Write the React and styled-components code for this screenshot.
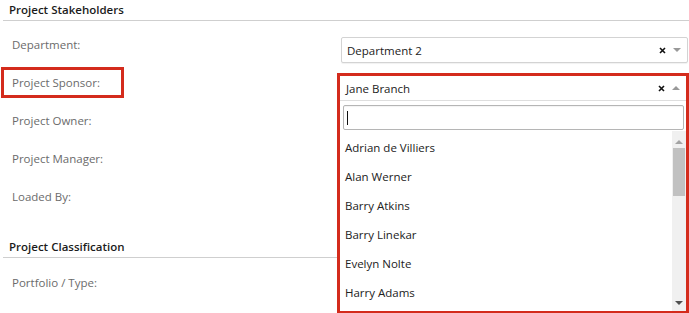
import React from 'react'
import styled, { createGlobalStyle } from 'styled-components'

const GlobalStyle = createGlobalStyle`
  html, body {
    margin: 0;
    padding: 0;
    background: #fff;
  }
  body {
    font-family: "Open Sans", "Noto Sans", sans-serif;
    font-size: 12px;
    color: #333;
  }
`

const Page = styled.div`
  width: 689px;
  height: 313px;
  overflow: hidden;
  background: #fff;
`

const Section = styled.div`
  margin-top: ${props => props.gap || 0}px;
`

const SectionTitle = styled.div`
  margin-left: 3px;
  padding-left: 6px;
  height: 20px;
  line-height: 20px;
  font-weight: 600;
  font-size: 11.5px;
  color: #1b1b1b;
  border-bottom: 1px solid #cfcfcf;
  margin-bottom: ${props => props.after || 8}px;
`

const Row = styled.div`
  display: grid;
  grid-template-columns: 341px 1fr;
  height: 38px;
  padding-right: 1px;
`

const Label = styled.div`
  margin: 3px 0 0 4px;
  width: 117px;
  height: 25px;
  line-height: 25px;
  padding-left: 8px;
  box-sizing: border-box;
  font-size: 11.5px;
  color: #6b6b6b;
  outline: ${props => (props.highlighted ? '3px solid #d42b1c' : 'none')};
`

const Field = styled.div`
  position: relative;
  margin-top: 8px;
`

const SelectBox = styled.div`
  display: flex;
  align-items: center;
  height: 26px;
  box-sizing: border-box;
  padding: 0 6px 0 5px;
  border: 1px solid #d3d3d3;
  border-radius: 2px;
  box-shadow: 0 1px 1px rgba(0, 0, 0, 0.06);
  background: #fff;
`

const SelectHead = styled.div`
  display: flex;
  align-items: center;
  height: 24px;
  padding: 0 6px 0 6px;
  border-bottom: 1px solid #dedede;
`

const Value = styled.span`
  flex: 1;
  font-size: 11.5px;
  color: #222;
`

const Clear = styled.span`
  width: 9px;
  display: flex;
  justify-content: center;
  margin-right: 6px;
`

const Arrow = styled.span`
  width: 0;
  height: 0;
  border-left: 4px solid transparent;
  border-right: 4px solid transparent;
  ${props =>
    props.up
      ? 'border-bottom: 4px solid #999;'
      : 'border-top: 4px solid #999;'}
`

const Highlight = styled.div`
  position: absolute;
  top: -2px;
  left: -4px;
  right: -1px;
  border: 3px solid #d42b1c;
  background: #fff;
  z-index: 2;
`

const SearchWrap = styled.div`
  padding: 4px 2px 1px 3px;
`

const Search = styled.div`
  height: 25px;
  box-sizing: border-box;
  border: 1px solid #b5b5b5;
  border-radius: 2px;
  box-shadow: inset 0 1px 1px rgba(0, 0, 0, 0.05);
  display: flex;
  align-items: center;
  padding-left: 3px;
`

const Caret = styled.span`
  width: 1px;
  height: 14px;
  background: #111;
`

const ListArea = styled.div`
  display: flex;
  height: 180px;
`

const Options = styled.ul`
  flex: 1;
  list-style: none;
  margin: 0;
  padding: 2px 0 0 0;
  overflow: hidden;
`

const Option = styled.li`
  height: 29px;
  line-height: 29px;
  padding-left: 5px;
  font-size: 11.5px;
  color: #222;
`

const Track = styled.div`
  width: 14px;
  background: #f0f0f0;
  display: flex;
  flex-direction: column;
  align-items: center;
`

const TrackArrow = styled.span`
  margin: ${props => (props.up ? '9px 0 4px' : 'auto 0 6px')};
  width: 0;
  height: 0;
  border-left: 4px solid transparent;
  border-right: 4px solid transparent;
  ${props =>
    props.up
      ? 'border-bottom: 4px solid #a3a3a3;'
      : 'border-top: 4px solid #505050;'}
`

const Thumb = styled.span`
  width: 12px;
  height: 48px;
  background: #c1c1c1;
`

const ClearIcon = () => (
  <svg width="7" height="7" viewBox="0 0 7 7">
    <path d="M1 1L6 6M6 1L1 6" stroke="#111" strokeWidth="1.6" />
  </svg>
)

const people = [
  'Adrian de Villiers',
  'Alan Werner',
  'Barry Atkins',
  'Barry Linekar',
  'Evelyn Nolte',
  'Harry Adams'
]

export default function App() {
  return (
    <Page>
      <GlobalStyle />
      <Section>
        <SectionTitle>Project Stakeholders</SectionTitle>
        <Row>
          <Label>Department:</Label>
          <Field>
            <SelectBox>
              <Value>Department 2</Value>
              <Clear>
                <ClearIcon />
              </Clear>
              <Arrow />
            </SelectBox>
          </Field>
        </Row>
        <Row>
          <Label highlighted>Project Sponsor:</Label>
          <Field>
            <Highlight>
              <SelectHead>
                <Value>Jane Branch</Value>
                <Clear>
                  <ClearIcon />
                </Clear>
                <Arrow up />
              </SelectHead>
              <SearchWrap>
                <Search>
                  <Caret />
                </Search>
              </SearchWrap>
              <ListArea>
                <Options>
                  {people.map(name => (
                    <Option key={name}>{name}</Option>
                  ))}
                </Options>
                <Track>
                  <TrackArrow up />
                  <Thumb />
                  <TrackArrow />
                </Track>
              </ListArea>
            </Highlight>
          </Field>
        </Row>
        <Row>
          <Label>Project Owner:</Label>
        </Row>
        <Row>
          <Label>Project Manager:</Label>
        </Row>
        <Row>
          <Label>Loaded By:</Label>
        </Row>
      </Section>
      <Section gap={18}>
        <SectionTitle after={9}>Project Classification</SectionTitle>
        <Row>
          <Label>Portfolio / Type:</Label>
        </Row>
      </Section>
    </Page>
  )
}
